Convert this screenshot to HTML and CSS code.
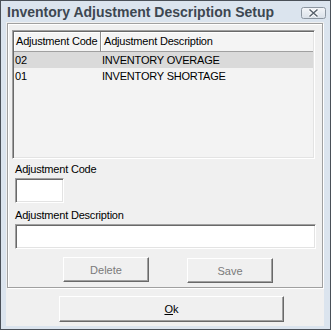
FILE: index.html
```html
<!DOCTYPE html>
<html lang="en">
<head>
  <meta charset="UTF-8" />
  <title>Inventory Adjustment Description Setup</title>
  <link rel="stylesheet" href="styles.css">
</head>
<body>
  <div class="window">
    <div class="titlebar">
      <span class="title">Inventory Adjustment Description Setup</span>
      <svg class="close" width="25" height="12" viewBox="0 0 25 12">
        <defs>
          <linearGradient id="cg" x1="0" y1="0" x2="0" y2="1">
            <stop offset="0" stop-color="#f4f6f9" />
            <stop offset="1" stop-color="#d9e0e8" />
          </linearGradient>
        </defs>
        <rect x="0.5" y="0.5" width="24" height="11" rx="2" fill="url(#cg)" stroke="#8c96a1" />
        <path d="M8.5 2.5 L16.5 9.5 M16.5 2.5 L8.5 9.5" stroke="#fff" stroke-width="3.2" />
        <path d="M8.5 2.5 L16.5 9.5 M16.5 2.5 L8.5 9.5" stroke="#59636e" stroke-width="1.6" />
      </svg>
    </div>

    <div class="client">
      <div class="groupbox">
        <div class="listview">
          <div class="lv-header">
            <div class="hcell">Adjustment Code</div>
            <div class="hcell hcell-wide">Adjustment Description</div>
          </div>
          <div class="lv-row selected">
            <div class="cell">02</div>
            <div class="cell">INVENTORY OVERAGE</div>
          </div>
          <div class="lv-row">
            <div class="cell">01</div>
            <div class="cell">INVENTORY SHORTAGE</div>
          </div>
        </div>

        <div class="field-label first">Adjustment Code</div>
        <input type="text" class="textbox code-box" />

        <div class="field-label">Adjustment Description</div>
        <input type="text" class="textbox desc-box" />

        <div class="btn-row">
          <button class="btn btn-delete" disabled>Delete</button>
          <button class="btn btn-save" disabled>Save</button>
        </div>
      </div>

      <button class="btn btn-ok"><u>O</u>k</button>
    </div>
  </div>
</body>
</html>
```

FILE: styles.css
```css
* {
  box-sizing: border-box;
}

body {
  margin: 0;
  font-family: "Liberation Sans", Arial, sans-serif;
  font-size: 11px;
  letter-spacing: -0.2px;
  color: #000;
  background: #fff;
}

.window {
  width: 331px;
  height: 330px;
  border: 1px solid #4a5058;
  background-color: #dbe4ee;
  display: flex;
  flex-direction: column;
}

.titlebar {
  height: 21px;
  display: flex;
  align-items: flex-start;
  padding-left: 6px;
}

.title {
  font-size: 14px;
  font-weight: bold;
  letter-spacing: 0;
  color: #3d4751;
  margin-top: 3px;
}

.close {
  display: block;
  margin-left: auto;
  margin-right: 4px;
  margin-top: 6px;
}

.client {
  flex: 1;
  margin: 0 6px 3px 5px;
  background-color: #f0f0f0;
  display: flex;
  flex-direction: column;
  align-items: flex-start;
}

.groupbox {
  margin: 1px 0 0 1px;
  width: 316px;
  border: 1px solid #a0a0a0;
  box-shadow: inset 1px 1px 0 #fff, 1px 1px 0 #fff;
  padding: 6px 0 4px 4px;
  display: flex;
  flex-direction: column;
  align-items: flex-start;
}

.listview {
  width: 303px;
  height: 129px;
  background-color: #f3f3f3;
  border: 1px solid;
  border-color: #a0a0a0 #fff #fff #a0a0a0;
  box-shadow: inset 1px 1px 0 #696969, inset -1px -1px 0 #e3e3e3;
  padding: 1px;
  overflow: hidden;
}

.lv-header {
  display: flex;
  height: 20px;
}

.hcell {
  width: 87px;
  flex-shrink: 0;
  padding-left: 2px;
  line-height: 19px;
  white-space: nowrap;
  overflow: hidden;
  background-color: #f4f4f4;
  border-right: 1px solid #8e8e8e;
  border-bottom: 1px solid #a0a0a0;
  box-shadow: inset 1px 1px 0 #fff;
}

.hcell-wide {
  flex: 1;
  padding-left: 3px;
  border-right: none;
}

.lv-row {
  display: flex;
  height: 16px;
  line-height: 16px;
  white-space: nowrap;
}

.lv-row.selected {
  background-color: #dadada;
}

.cell {
  width: 87px;
  flex-shrink: 0;
  padding-left: 1px;
}

.cell + .cell {
  flex: 1;
  padding-left: 1px;
}

.field-label {
  margin-top: 6px;
  margin-left: 3px;
  line-height: 13px;
}

.field-label.first {
  margin-top: 4px;
}

.textbox {
  display: block;
  margin: 2px 0 0 3px;
  height: 25px;
  background: #fff;
  border: 1px solid;
  border-color: #a0a0a0 #fff #fff #a0a0a0;
  box-shadow: inset 1px 1px 0 #696969, inset -1px -1px 0 #e3e3e3;
  outline: none;
  padding: 0 3px;
  font: inherit;
}

.code-box {
  width: 49px;
}

.desc-box {
  width: 301px;
}

.btn-row {
  display: flex;
  align-items: flex-start;
  margin-top: 8px;
  margin-left: 51px;
  gap: 38px;
}

.btn {
  width: 86px;
  height: 25px;
  background-color: #f0f0f0;
  border: 1px solid;
  border-color: #fff #696969 #696969 #fff;
  box-shadow: inset -1px -1px 0 #a0a0a0;
  font: inherit;
  color: #000;
  padding: 0;
}

.btn:disabled {
  color: #7a7a7a;
}

.btn-save {
  margin-top: 1px;
}

.btn-ok {
  width: 225px;
  height: 26px;
  margin: 8px 0 0 53px;
}
```
